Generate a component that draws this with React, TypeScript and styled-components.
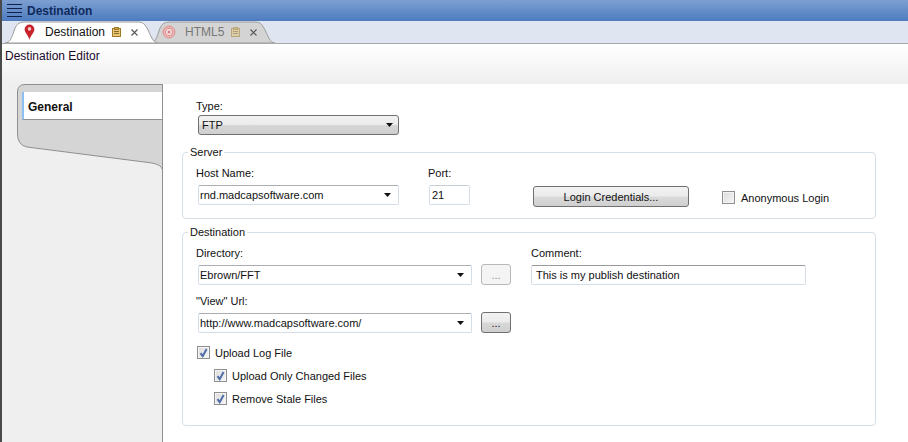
import * as React from "react";
import styled, { createGlobalStyle } from "styled-components";

const Global = createGlobalStyle`
  html, body {
    margin: 0;
    padding: 0;
    background: #fff;
    overflow: hidden;
  }
  body {
    font-family: "Liberation Sans", Arial, sans-serif;
    font-size: 11px;
    color: #111;
  }
`

const Lock = ({ faded }: { faded?: boolean }) => (
  <LockSvg width="9" height="10" viewBox="0 0 9 10" $faded={faded}>
    <rect x="0.5" y="1.5" width="8" height="8" fill="#e8c878" stroke="#a07c28" />
    <rect x="2.5" y="0.5" width="4" height="2" fill="#c9a650" stroke="#a07c28" />
    <path d="M2 4.5h5M2 6.5h5" stroke="#8a6a20" />
  </LockSvg>
)

const CloseX = () => (
  <CloseSvg width="7" height="7" viewBox="0 0 7 7">
    <path d="M0.5 0.5l6 6M6.5 0.5l-6 6" stroke="#555" strokeWidth="1.1" fill="none" />
  </CloseSvg>
)

const Check = ({ checked }: { checked?: boolean }) => (
  <CheckBox>
    {checked && (
      <svg width="9" height="10" viewBox="0 0 9 10">
        <path d="M1.5 5.2l2.2 3L7.6 1" stroke="#4f6ea8" strokeWidth="2" fill="none" />
      </svg>
    )}
  </CheckBox>
)

const Arrow = () => (
  <svg width="7" height="4" viewBox="0 0 7 4">
    <path d="M0 0h7L3.500 4z" fill="#111" />
  </svg>
)

const App = () => (
  <Wrap>
    <Global />
    <TitleBar>
      <Burger><i /><i /><i /><i /></Burger>
      Destination
    </TitleBar>
    <TabStrip>
      <Tab $active>
        <TabShape width="153" height="22" viewBox="0 0 153 22">
          <path d="M0 22C5 22 7 16 9 10C11 4 13 1 20 1H133C138 1 140 3 143 9C146 15 148 22 153 22Z" fill="#fff" stroke="#9a9a9a" />
        </TabShape>
        <svg width="11" height="16" viewBox="0 0 12 18">
          <path d="M6 18C5 13 0.500 10 0.500 6a5.500 5.500 0 0 1 11 0c0 4-4.500 7-5.500 12z" fill="#c8222c" />
          <circle cx="6" cy="5.500" r="2" fill="#f3c9c9" />
        </svg>
        <TabLabel $active>Destination</TabLabel>
        <Lock />
        <CloseX />
      </Tab>
      <Tab>
        <TabShape width="124" height="22" viewBox="0 0 124 22">
          <path d="M0 22C4 22 6 16 8 10C10 4 12 1 19 1H104C109 1 111 3 114 9C117 15 119 22 124 22Z" fill="#d4d4d4" stroke="#9a9a9a" />
        </TabShape>
        <svg width="14" height="14" viewBox="0 0 14 14">
          <circle cx="7" cy="7" r="6" fill="#eeb4b4" stroke="#dc9090" />
          <circle cx="7" cy="7" r="3.700" fill="#f4e0e0" stroke="#dc9090" />
          <circle cx="7" cy="7" r="1.500" fill="#d88080" />
        </svg>
        <TabLabel>HTML5</TabLabel>
        <Lock faded />
        <CloseX />
      </Tab>
    </TabStrip>
    <EditorHead>Destination Editor</EditorHead>
    <Body>
      <Sidebar>
        <SideShape width="146" height="86" viewBox="0 0 146 86">
          <path d="M145.500 0.500H8Q0.500 0.500 0.500 8V50Q0.500 61 10 63L135 79Q145 81 145.500 86Z" fill="#d5d5d5" stroke="#8f8f8f" />
        </SideShape>
        <SideTab>General</SideTab>
      </Sidebar>
      <Main>
        <TypeBlock>
          <Label $tight>Type:</Label>
          <Dropdown>FTP<Arrow /></Dropdown>
        </TypeBlock>
        <Group>
          <Legend>Server</Legend>
          <ServerRow>
            <Field $width={232}>
              <Label>Host Name:</Label>
              <Combo $width={201}>rnd.madcapsoftware.com<Arrow /></Combo>
            </Field>
            <Field $width={105}>
              <Label>Port:</Label>
              <Input $width={41} $inset={1} $pad={2}>21</Input>
            </Field>
            <LoginButton>Login Credentials...</LoginButton>
            <CheckRow $indent={33}>
              <Check />
              Anonymous Login
            </CheckRow>
          </ServerRow>
        </Group>
        <Group $second>
          <Legend>Destination</Legend>
          <DestGrid>
            <DestColumn>
              <Label>Directory:</Label>
              <ComboRow>
                <Combo $width={274}>Ebrown/FFT<Arrow /></Combo>
                <Browse>...</Browse>
              </ComboRow>
              <Label $gap>"View" Url:</Label>
              <ComboRow>
                <Combo $width={274}>http://www.madcapsoftware.com/<Arrow /></Combo>
                <Browse $focus>...</Browse>
              </ComboRow>
            </DestColumn>
            <Field $width={275}>
              <Label>Comment:</Label>
              <Input $width={275} $inset={0} $pad={4} $strong>This is my publish destination</Input>
            </Field>
          </DestGrid>
          <Checks>
            <CheckRow $indent={0}><Check checked />Upload Log File</CheckRow>
            <CheckRow $indent={17}><Check checked />Upload Only Changed Files</CheckRow>
            <CheckRow $indent={17}><Check checked />Remove Stale Files</CheckRow>
          </Checks>
        </Group>
      </Main>
    </Body>
  </Wrap>
);

export default App;

const Wrap = styled.div`
  width: 908px;
  height: 442px;
  box-sizing: border-box;
  border-left: 2px solid #4a4a4a;
  display: flex;
  flex-direction: column;
  overflow: hidden;
`

const TitleBar = styled.div`
  height: 21px;
  flex: none;
  display: flex;
  align-items: center;
  gap: 5px;
  padding-left: 5px;
  background: linear-gradient(#7d9fd2, #4d7cbf);
  color: #0f2a5c;
  font-weight: 700;
  font-size: 12px;
`

const Burger = styled.div`
  width: 15px;
  display: flex;
  flex-direction: column;
  gap: 3px;
  i {
    display: block;
    height: 1px;
    background: #10224c;
  }
`

const TabStrip = styled.div`
  height: 22px;
  flex: none;
  display: flex;
  padding-left: 3px;
  background: #dfe6f1;
  border-bottom: 1px solid #a8a8a8;
  box-sizing: content-box;
`

const Tab = styled.div<{ $active?: boolean }>`
  position: relative;
  height: 22px;
  width: ${p => (p.$active ? 146 : 124)}px;
  display: flex;
  align-items: center;
  padding-left: ${p => (p.$active ? 19 : 11)}px;
  box-sizing: border-box;
  z-index: ${p => (p.$active ? 2 : 1)};
  > * {
    position: relative;
  }
`

const TabShape = styled.svg`
  && {
    position: absolute;
  }
  left: 0;
  top: 0;
`

const TabLabel = styled.span<{ $active?: boolean }>`
  margin: 0 7px 0 ${p => (p.$active ? 10 : 9)}px;
  font-size: 12px;
  color: ${p => (p.$active ? "#111" : "#777")};
`

const LockSvg = styled.svg<{ $faded?: boolean }>`
  opacity: ${p => (p.$faded ? 0.5 : 1)};
  flex: none;
`

const CloseSvg = styled.svg`
  margin-left: 10px;
  flex: none;
`

const EditorHead = styled.div`
  height: 40px;
  flex: none;
  box-sizing: border-box;
  padding: 5px 0 0 3px;
  background: linear-gradient(#fff, #efefef);
  font-size: 12px;
  color: #1a0a2a;
`

const Body = styled.div`
  flex: 1;
  display: flex;
  min-height: 0;
`

const Sidebar = styled.div`
  position: relative;
  width: 160px;
  flex: none;
  box-sizing: content-box;
  background: #efefef;
  border-right: 1px solid #8f8f8f;
  padding-top: 8px;
`

const SideShape = styled.svg`
  position: absolute;
  left: 15px;
  top: 0;
`

const SideTab = styled.div`
  position: relative;
  margin-left: 20px;
  height: 28px;
  line-height: 30px;
  box-sizing: border-box;
  padding-left: 4px;
  background: #fff;
  border-left: 2px solid #8cc0f4;
  border-bottom: 1px solid #8f8f8f;
  font-weight: 700;
  font-size: 12px;
`

const Main = styled.div`
  flex: 1;
  padding: 15px 0 0 19px;
`

const TypeBlock = styled.div`
  padding-left: 14px;
  margin-bottom: 10px;
`

const Label = styled.div<{ $gap?: boolean; $tight?: boolean }>`
  height: 15px;
  line-height: 15px;
  margin-bottom: ${p => (p.$tight ? 1 : 4)}px;
  margin-top: ${p => (p.$gap ? 9 : 0)}px;
`

const Dropdown = styled.div`
  margin-left: 2px;
  width: 201px;
  height: 20px;
  box-sizing: border-box;
  display: flex;
  align-items: center;
  justify-content: space-between;
  padding: 0 5px 0 3px;
  border: 1px solid #707070;
  border-radius: 3px;
  background: linear-gradient(#f2f2f2 0%, #ebebeb 48%, #d6d6d6 52%, #cfcfcf 100%);
`

const Combo = styled.div<{ $width: number }>`
  margin-left: 2px;
  width: ${p => p.$width}px;
  height: 20px;
  box-sizing: border-box;
  display: flex;
  align-items: center;
  justify-content: space-between;
  padding: 0 7px 0 1px;
  border: 1px solid #d5dee8;
  border-top-color: #abadb3;
  border-radius: 2px;
  background: #fff;
`

const Input = styled.div<{ $width: number; $inset: number; $pad: number; $strong?: boolean }>`
  margin-left: ${p => p.$inset}px;
  width: ${p => p.$width}px;
  height: 20px;
  box-sizing: border-box;
  line-height: 18px;
  padding: 0 ${p => p.$pad}px;
  border: 1px solid #d5dee8;
  border-top-color: ${p => (p.$strong ? "#9a9a9a" : "#c8ced8")};
  border-radius: 2px;
  background: #fff;
`

const Group = styled.fieldset<{ $second?: boolean }>`
  margin: ${p => (p.$second ? "6px" : "0")} 0 0 0;
  padding: 0 0 0 13px;
  width: 694px;
  box-sizing: border-box;
  border: 1px solid #d5dfe5;
  border-radius: 4px;
`

const Legend = styled.legend`
  margin-left: -8px;
  padding: 0 2px;
  height: 15px;
  line-height: 15px;
`

const ServerRow = styled.div`
  display: flex;
  align-items: flex-start;
  height: 58px;
  padding-top: 6px;
  box-sizing: border-box;
`

const Field = styled.div<{ $width: number }>`
  width: ${p => p.$width}px;
  flex: none;
`

const LoginButton = styled.div`
  margin-top: 20px;
  width: 156px;
  height: 21px;
  flex: none;
  box-sizing: border-box;
  text-align: center;
  line-height: 20px;
  border: 1px solid #707070;
  border-radius: 3px;
  background: linear-gradient(#f2f2f2 0%, #ebebeb 48%, #dbdbdb 52%, #cfcfcf 100%);
`

const CheckRow = styled.div<{ $indent: number }>`
  display: flex;
  align-items: center;
  gap: 6px;
  height: 23px;
  margin-left: ${p => p.$indent}px;
  ${LoginButton} + & {
    margin-top: 20px;
  }
`

const CheckBox = styled.span`
  width: 13px;
  height: 13px;
  flex: none;
  box-sizing: border-box;
  display: flex;
  align-items: center;
  justify-content: center;
  border: 1px solid #8e8f8f;
  background: linear-gradient(135deg, #dcdcdc, #f6f6f6);
  box-shadow: inset 0 0 0 1px #f4f4f4;
`

const DestGrid = styled.div`
  display: flex;
  padding-top: 6px;
`

const DestColumn = styled.div`
  width: 335px;
  flex: none;
`

const ComboRow = styled.div`
  display: flex;
  gap: 9px;
`

const Browse = styled.div<{ $focus?: boolean }>`
  width: 30px;
  height: 21px;
  margin-top: -1px;
  box-sizing: border-box;
  text-align: center;
  line-height: 20px;
  border: 1px solid ${p => (p.$focus ? "#707070" : "#b8b8b8")};
  border-radius: 3px;
  color: ${p => (p.$focus ? "#111" : "#888")};
  background: ${p =>
    p.$focus
      ? "linear-gradient(#f2f2f2 0%, #ebebeb 48%, #d8d8d8 52%, #cfcfcf 100%)"
      : "#f4f4f4"};
`

const Checks = styled.div`
  padding: 8px 0 15px 1px;
  ${CheckRow} {
    gap: 5px;
  }
`
